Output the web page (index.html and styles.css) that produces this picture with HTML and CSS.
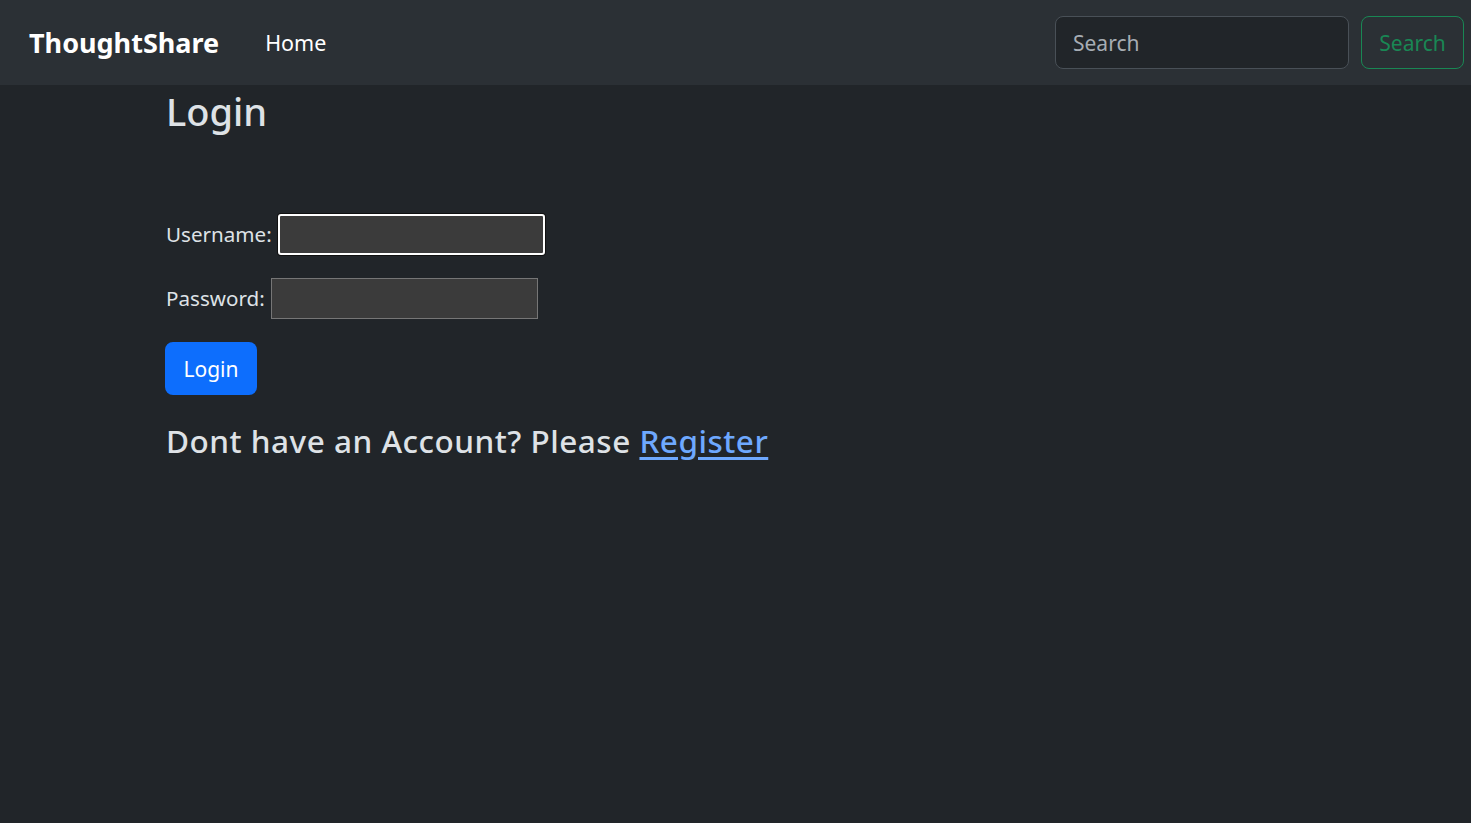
FILE: index.html
```html
<!DOCTYPE html>
<html lang="en">
<head>
<meta charset="utf-8">
<title>ThoughtShare - Login</title>
<link rel="stylesheet" href="styles.css">
</head>
<body>
<nav class="navbar">
  <div class="nav-left">
    <a class="brand" href="#">ThoughtShare</a>
    <a class="nav-link" href="#">Home</a>
  </div>
  <form class="search-form">
    <input class="search-input" type="search" placeholder="Search">
    <button class="search-btn" type="button">Search</button>
  </form>
</nav>
<main class="container">
  <h2 class="title">Login</h2>
  <form class="login-form">
    <div class="row row-user">
      <label class="label" for="u">Username:</label>
      <input class="field field-focus" id="u" type="text">
    </div>
    <div class="row row-pass">
      <label class="label" for="p">Password:</label>
      <input class="field" id="p" type="password">
    </div>
    <button class="login-btn" type="button">Login</button>
  </form>
  <h4 class="register">Dont have an Account? Please <a href="#">Register</a></h4>
</main>
</body>
</html>
```
FILE: styles.css
```css
* { box-sizing: border-box; }
html, body { margin: 0; padding: 0; }
body {
  background: #212529;
  color: #dee2e6;
  font-family: "Noto Sans", "Open Sans", sans-serif;
  font-size: 21px;
  height: 823px;
}
.navbar {
  height: 85px;
  background: #2b3035;
  display: flex;
  align-items: center;
  justify-content: space-between;
  padding: 0 7px 0 29px;
}
.nav-left { display: flex; align-items: center; }
.brand {
  color: #fff;
  font-weight: 700;
  font-size: 27px;
  text-decoration: none;
  margin-right: 46px;
}
.nav-link {
  color: #fff;
  text-decoration: none;
  font-size: 21.5px;
}
.search-form { display: flex; align-items: center; gap: 12px; }
.search-input {
  width: 294px;
  height: 53px;
  background: #212529;
  border: 1px solid #495057;
  border-radius: 8px;
  color: #dee2e6;
  font-family: inherit;
  font-size: 21px;
  padding: 0 17px;
  outline: none;
}
.search-input::placeholder { color: #a7adb4; }
.search-btn {
  width: 103px;
  height: 53px;
  background: transparent;
  border: 1px solid #198754;
  border-radius: 8px;
  color: #198754;
  font-family: inherit;
  font-size: 21px;
  padding: 0;
}
.container { padding-left: 166px; }
.title {
  margin: 0;
  padding-top: 2px;
  font-size: 38px;
  font-weight: 500;
  line-height: 48px;
}
.login-form { margin-top: 78px; }
.row { display: flex; align-items: center; gap: 6px; }
.label { color: #dee2e6; font-size: 20.6px; }
.row-user { height: 42px; }
.row-pass { height: 42px; margin-top: 22px; }
.field {
  width: 267px;
  height: 41px;
  background: #3b3b3b;
  border: 1px solid #767676;
  border-radius: 0;
  color: #fff;
  padding: 0 6px;
}
.field-focus {
  border: 2px solid #fff;
  border-radius: 3px;
  box-shadow: 0 0 0 1px #101010;
  outline: none;
}
.login-btn {
  margin-top: 23px;
  width: 92px;
  height: 53px;
  background: #0d6efd;
  border: none;
  border-radius: 8px;
  color: #fff;
  font-family: inherit;
  font-size: 21px;
  padding: 0;
  margin-left: -1px;
}
.register {
  margin: 22px 0 0;
  font-size: 31.5px;
  font-weight: 500;
  letter-spacing: 0.5px;
  line-height: 48px;
}
.register a { color: #6ea8fe; text-decoration: underline; text-underline-offset: 4px; }
```
